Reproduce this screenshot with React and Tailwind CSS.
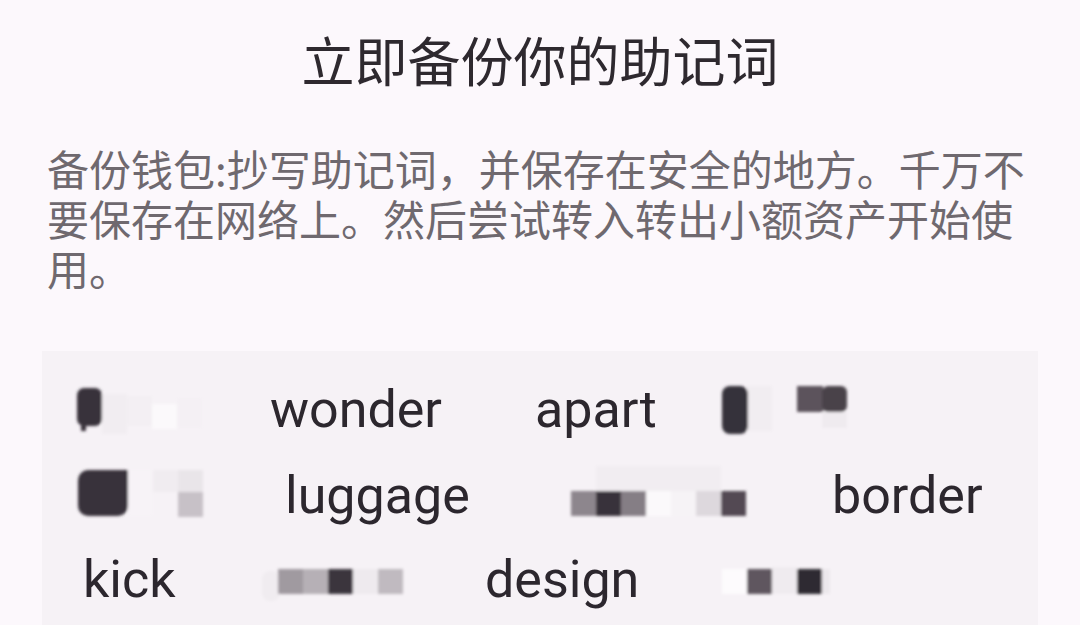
import React from 'react';

const cjk = { fontFamily: '"Noto Sans CJK SC", "Noto Sans", sans-serif' };
const latin = { fontFamily: 'Roboto, "Noto Sans", sans-serif' };

// pixelated (mosaic) words, cells of 25px
const Mosaic = ({ w, h, cells, mt }) => (
  <svg width={w} height={h} viewBox={`0 0 ${w} ${h}`} style={{ marginTop: mt }} className="shrink-0 overflow-visible">
    <defs>
      <filter id="soft" x="-10%" y="-10%" width="120%" height="120%">
        <feGaussianBlur stdDeviation="1.4" />
      </filter>
    </defs>
    <g filter="url(#soft)">
      {cells.map((c, i) => (
        <rect key={i} x={c.x} y={c.y} width={c.w || 25} height={c.h || 25} rx={c.r || 0} fill={c.f} />
      ))}
    </g>
  </svg>
);

const Word = ({ children }) => (
  <span style={latin} className="block text-[52px] leading-[52px] text-[#2c272e]">
    {children}
  </span>
);

export default function App() {
  return (
    <div className="w-[1080px] h-[625px] overflow-hidden bg-[#fcf8fc]">
      <h1 style={cjk} className="pt-[31px] text-center text-[53px] leading-[56px] font-normal text-[#2e292f]">
        立即备份你的助记词
      </h1>
      <p style={cjk} className="mt-[56px] pl-[47px] pr-[46px] text-[42px] leading-[50px] text-[#6f696f]">
        备份钱包:抄写助记词，并保存在安全的地方。千万不要保存在网络上。然后尝试转入转出小额资产开始使用。
      </p>

      <div className="mt-[58px] mx-[42px] h-[300px] bg-[#f6f2f6] pt-[33px]">
        {/* row 1 */}
        <div className="flex items-start h-[86px] pl-[35px]">
          <div className="w-[193px] shrink-0">
            <Mosaic
              w={130}
              h={56}
              mt={2}
              cells={[
                { x: 25, y: 8, w: 25, h: 40, f: '#f1edf1' },
                { x: 50, y: 10, w: 25, h: 30, f: '#f3eff3' },
                { x: 75, y: 18, w: 25, h: 25, f: '#fbf9fb' },
                { x: 100, y: 12, w: 25, h: 30, f: '#f4f0f4' },
                { x: 0, y: 2, w: 25, h: 38, r: 7, f: '#38313a' },
                { x: 4, y: 30, w: 5, h: 15, f: '#38313a' },
              ]}
            />
          </div>
          <div className="w-[265px] shrink-0">
            <Word>wonder</Word>
          </div>
          <div className="w-[187px] shrink-0">
            <Word>apart</Word>
          </div>
          <Mosaic
            w={130}
            h={56}
            mt={2}
            cells={[
              { x: 25, y: 0, w: 25, h: 45, f: '#f1edf1' },
              { x: 0, y: 0, w: 26, h: 48, r: 8, f: '#36303a' },
              { x: 75, y: 0, w: 26, h: 26, f: '#5b535b' },
              { x: 100, y: 0, w: 25, h: 26, r: 6, f: '#4a424a' },
              { x: 100, y: 26, w: 25, h: 16, f: '#efebef' },
            ]}
          />
        </div>

        {/* row 2 */}
        <div className="flex items-start h-[84px] pl-[36px]">
          <div className="w-[207px] shrink-0">
            <Mosaic
              w={130}
              h={56}
              mt={0}
              cells={[
                { x: 100, y: 0, w: 25, h: 22, f: '#e9e5e9' },
                { x: 75, y: 0, w: 25, h: 22, f: '#f0ecf0' },
                { x: 50, y: 0, w: 25, h: 46, f: '#f7f3f7' },
                { x: 100, y: 22, w: 25, h: 25, f: '#c7c1c7' },
                { x: 0, y: 0, w: 50, h: 46, r: 10, f: '#37303a' },
                { x: 25, y: 0, w: 25, h: 20, f: '#37303a' },
              ]}
            />
          </div>
          <div className="w-[286px] shrink-0">
            <Word>luggage</Word>
          </div>
          <div className="w-[261px] shrink-0">
            <Mosaic
              w={180}
              h={56}
              mt={-4}
              cells={[
                { x: 25, y: 0, w: 125, h: 25, f: '#f1edf1' },
                { x: 0, y: 25, f: '#8d868d' },
                { x: 25, y: 25, f: '#37313a' },
                { x: 50, y: 25, f: '#857e85' },
                { x: 75, y: 25, f: '#fbf9fb' },
                { x: 100, y: 25, f: '#f6f3f6' },
                { x: 125, y: 25, f: '#ddd8dd' },
                { x: 150, y: 25, f: '#524a52' },
              ]}
            />
          </div>
          <Word>border</Word>
        </div>

        {/* row 3 */}
        <div className="flex items-start h-[85px] pl-[41px]">
          <div className="w-[179px] shrink-0">
            <Word>kick</Word>
          </div>
          <div className="w-[223px] shrink-0">
            <Mosaic
              w={145}
              h={56}
              mt={13}
              cells={[
                { x: 0, y: 4, w: 18, h: 30, r: 8, f: '#f0ecf0' },
                { x: 16, y: 2, f: '#a09aa0' },
                { x: 41, y: 2, f: '#b6b0b6' },
                { x: 66, y: 2, f: '#3a343c' },
                { x: 91, y: 2, f: '#eeeaee' },
                { x: 116, y: 2, f: '#c0bac0' },
              ]}
            />
          </div>
          <div className="w-[235px] shrink-0">
            <Word>design</Word>
          </div>
          <Mosaic
            w={120}
            h={56}
            mt={13}
            cells={[
              { x: 2, y: 2, f: '#fdfbfd' },
              { x: 27, y: 2, f: '#5e565e' },
              { x: 52, y: 0, w: 25, h: 27, f: '#efebef' },
              { x: 77, y: 2, f: '#2f2a31' },
              { x: 102, y: 2, w: 8, f: '#ece8ec' },
            ]}
          />
        </div>
      </div>
    </div>
  );
}
